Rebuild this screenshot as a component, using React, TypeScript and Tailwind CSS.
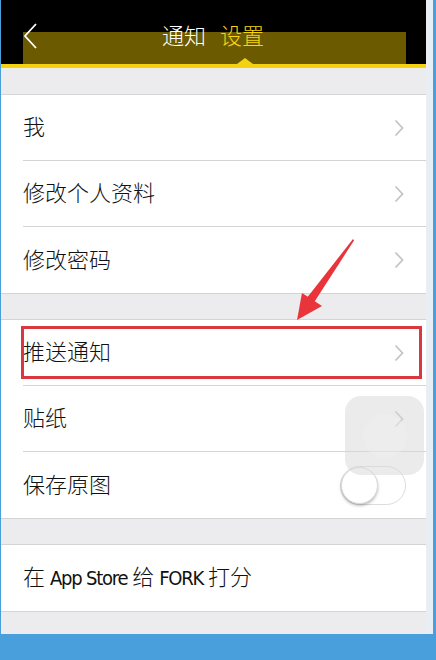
import React from "react";

const font = { fontFamily: '"Noto Sans CJK SC", "Liberation Sans", sans-serif' };

function Chevron() {
  return (
    <svg width="10" height="18" viewBox="0 0 10 18" className="shrink-0">
      <path d="M1.5 1.5 L8.5 9 L1.5 16.5" fill="none" stroke="#c4c4c8" strokeWidth="1.8" />
    </svg>
  );
}

function Row({ label, last, right }: { label: React.ReactNode; last?: boolean; right?: React.ReactNode }) {
  return (
    <div className="bg-white pl-[22px]">
      <div className={`h-[66px] flex items-center justify-between pr-[22px] ${last ? "" : "border-b border-[#d4d4d4]"}`}>
        <span className="text-[22px] text-[#111] leading-none font-light mb-[5px]">{label}</span>
        {right ?? <Chevron />}
      </div>
    </div>
  );
}

function Toggle() {
  return (
    <div className="w-[66px] h-[39px] rounded-full border border-[#dcdcdc] bg-white relative -mr-[2px]">
      <div className="absolute left-0 top-0 w-[37px] h-[37px] rounded-full bg-white border border-[#d8d8d8] shadow-[0_2px_3px_rgba(0,0,0,0.25)]" />
    </div>
  );
}

// narrow latin words like the condensed system font
function Latin({ children }: { children: string }) {
  return (
    <span className="text-[20px] tracking-[-1.2px]" style={{ fontFamily: '"DejaVu Sans Condensed", sans-serif' }}>
      {children}
    </span>
  );
}

export default function App() {
  return (
    <div className="w-[436px] h-[660px] bg-[#489fdc] overflow-hidden flex flex-col" style={font}>
      <div className="flex h-[634px] pl-[1px]">
        <div className="w-[425px] flex flex-col bg-[#ececee] relative">
          {/* header */}
          <div className="h-[64px] bg-black relative flex items-center justify-center">
            <div className="absolute left-[22px] top-[32px] w-[383px] h-[32px] bg-[#6b5a00]" />
            <svg width="16" height="28" viewBox="0 0 16 28" className="absolute left-[22px] top-[22px]">
              <path d="M13 2 L2 14 L13 26" fill="none" stroke="#ffffff" strokeWidth="1.8" />
            </svg>
            <div className="relative flex items-center gap-[14px] text-[22px] leading-none font-light mt-[4px] -ml-[1px]">
              <span className="text-white">通知</span>
              <span className="text-[#f7d417]">设置</span>
            </div>
            <div className="absolute left-[236px] bottom-0 w-0 h-0 border-l-[8px] border-r-[8px] border-b-[6px] border-l-transparent border-r-transparent border-b-[#f5d20f]" />
          </div>
          <div className="h-[4px] bg-[#f5d20f]" />

          <div className="h-[27px] border-b border-[#d4d4d4]" />
          <Row label="我" />
          <Row label="修改个人资料" />
          <Row label="修改密码" last />
          <div className="h-[27px] border-y border-[#d4d4d4]" />
          <Row label="推送通知" />
          <Row label="贴纸" />
          <Row label="保存原图" last right={<Toggle />} />
          <div className="h-[27px] border-y border-[#d4d4d4]" />
          <Row
            label={
              <>
                在 <Latin>App Store</Latin> 给 <Latin>FORK</Latin> 打分
              </>
            }
            last
            right={<span />}
          />
          <div className="flex-1 border-t border-[#d4d4d4]" />

          {/* red highlight box */}
          <div className="absolute left-[20px] top-[326px] w-[401px] h-[53px] border-[3px] border-[#d9383f]" />
          {/* red arrow */}
          <svg width="80" height="90" viewBox="0 0 80 90" className="absolute left-[290px] top-[236px]">
            <path d="M62 3 L63 4.5 L22 68 L15 63 Z" fill="#e8343a" />
            <path d="M6 84 L11 57 L31 70 Z" fill="#e8343a" />
          </svg>
          {/* assistive touch */}
          <div className="absolute left-[344px] top-[396px] w-[79px] h-[79px] rounded-[16px] bg-[#d8d8d8]/50 flex items-center justify-center">
            <div className="w-[44px] h-[44px] rounded-full bg-[#f0f0f0]/40" />
          </div>
        </div>
        <div className="w-[7px] bg-[#e8eef3]" />
        <div className="flex-1 bg-[#489fdc]" />
      </div>
    </div>
  );
}
